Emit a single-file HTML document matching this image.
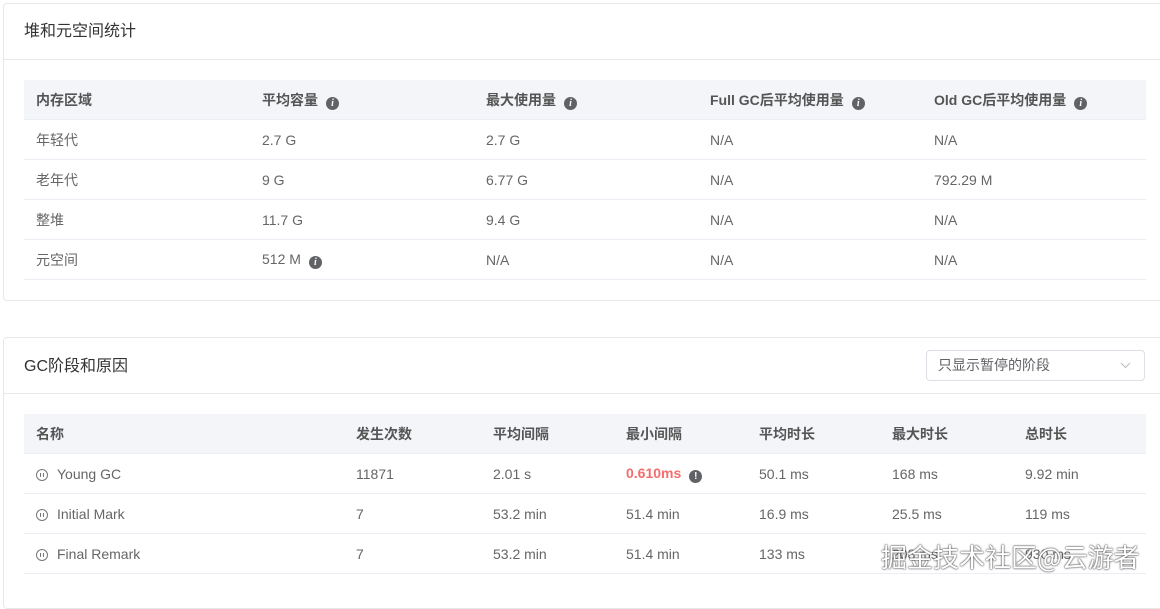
<!DOCTYPE html>
<html><head><meta charset="utf-8"><style>
body{margin:0;background:#fff;font-family:"Liberation Sans","Noto Sans CJK SC",sans-serif;width:1160px;height:590px;overflow:hidden;position:relative}
.card{position:absolute;left:3px;width:1170px;border:1px solid #e8e8e8;border-radius:4px;background:#fff}
.hd{height:55px;border-bottom:1px solid #e8e8e8;font-size:16px;color:#333;line-height:55px;padding-left:20px;position:relative}
table{position:absolute;left:20px;border-collapse:collapse;table-layout:fixed}
td,th{height:39px;border-bottom:1px solid #ebeef5;font-size:14px;color:#666;text-align:left;padding:0 0 0 12px;white-space:nowrap}
th{background:#f3f5f9;color:#555;font-weight:bold;height:39px}
.i{display:inline-block;width:13px;height:13px;border-radius:50%;background:#606266;color:#fff;font-size:10px;line-height:13px;text-align:center;font-weight:bold;vertical-align:-1px;margin-left:8px;font-family:"Liberation Serif",serif;font-style:italic}
.p{display:inline-block;width:10px;height:10px;border:1px solid #777;border-radius:50%;vertical-align:-2px;margin-right:9px;position:relative}
.p:before,.p:after{content:"";position:absolute;top:3px;width:1px;height:4px;background:#777;left:3px}
.p:after{left:6px}
.sel{position:absolute;left:922px;top:12px;width:219px;height:31px;border:1px solid #dcdfe6;border-radius:4px;font-size:14px;color:#606266;line-height:29px;padding-left:11px;box-sizing:border-box}
.wm{position:absolute;left:881px;top:538px;font-size:26px;color:#fff;text-shadow:0 0 2px #444,0 0 1px #222;font-family:"Noto Sans CJK SC",sans-serif;white-space:nowrap}
</style></head><body>
<div class="card" style="top:3px;height:296px">
<div class="hd">堆和元空间统计</div>
<table style="top:76px;width:1122px">
<colgroup><col style="width:226px"><col style="width:224px"><col style="width:224px"><col style="width:224px"><col style="width:224px"></colgroup>
<tr><th>内存区域</th><th>平均容量<span class="i">i</span></th><th>最大使用量<span class="i">i</span></th><th>Full GC后平均使用量<span class="i">i</span></th><th>Old GC后平均使用量<span class="i">i</span></th></tr>
<tr><td>年轻代</td><td>2.7 G</td><td>2.7 G</td><td>N/A</td><td>N/A</td></tr>
<tr><td>老年代</td><td>9 G</td><td>6.77 G</td><td>N/A</td><td>792.29 M</td></tr>
<tr><td>整堆</td><td>11.7 G</td><td>9.4 G</td><td>N/A</td><td>N/A</td></tr>
<tr><td>元空间</td><td>512 M<span class="i">i</span></td><td>N/A</td><td>N/A</td><td>N/A</td></tr>
</table></div>
<div class="card" style="top:337px;height:270px">
<div class="hd" style="line-height:58px">GC阶段和原因<div class="sel" style="line-height:29px">只显示暂停的阶段<svg style="position:absolute;right:13px;top:11px" width="11" height="7" viewBox="0 0 11 7"><path d="M1 1l4.5 4.5L10 1" fill="none" stroke="#bbb" stroke-width="1"/></svg></div></div>
<table style="top:76px;width:1122px">
<colgroup><col style="width:320px"><col style="width:137px"><col style="width:133px"><col style="width:133px"><col style="width:133px"><col style="width:133px"><col style="width:133px"></colgroup>
<tr><th>名称</th><th>发生次数</th><th>平均间隔</th><th>最小间隔</th><th>平均时长</th><th>最大时长</th><th>总时长</th></tr>
<tr><td><span class="p"></span>Young GC</td><td>11871</td><td>2.01 s</td><td><b style="color:#f56c6c">0.610ms</b><span class="i" style="font-style:normal;font-family:'Liberation Sans'">!</span></td><td>50.1 ms</td><td>168 ms</td><td>9.92 min</td></tr>
<tr><td><span class="p"></span>Initial Mark</td><td>7</td><td>53.2 min</td><td>51.4 min</td><td>16.9 ms</td><td>25.5 ms</td><td>119 ms</td></tr>
<tr><td><span class="p"></span>Final Remark</td><td>7</td><td>53.2 min</td><td>51.4 min</td><td>133 ms</td><td>208 ms</td><td>930 ms</td></tr>
</table></div>
<div class="wm">掘金技术社区@云游者</div>
</body></html>
